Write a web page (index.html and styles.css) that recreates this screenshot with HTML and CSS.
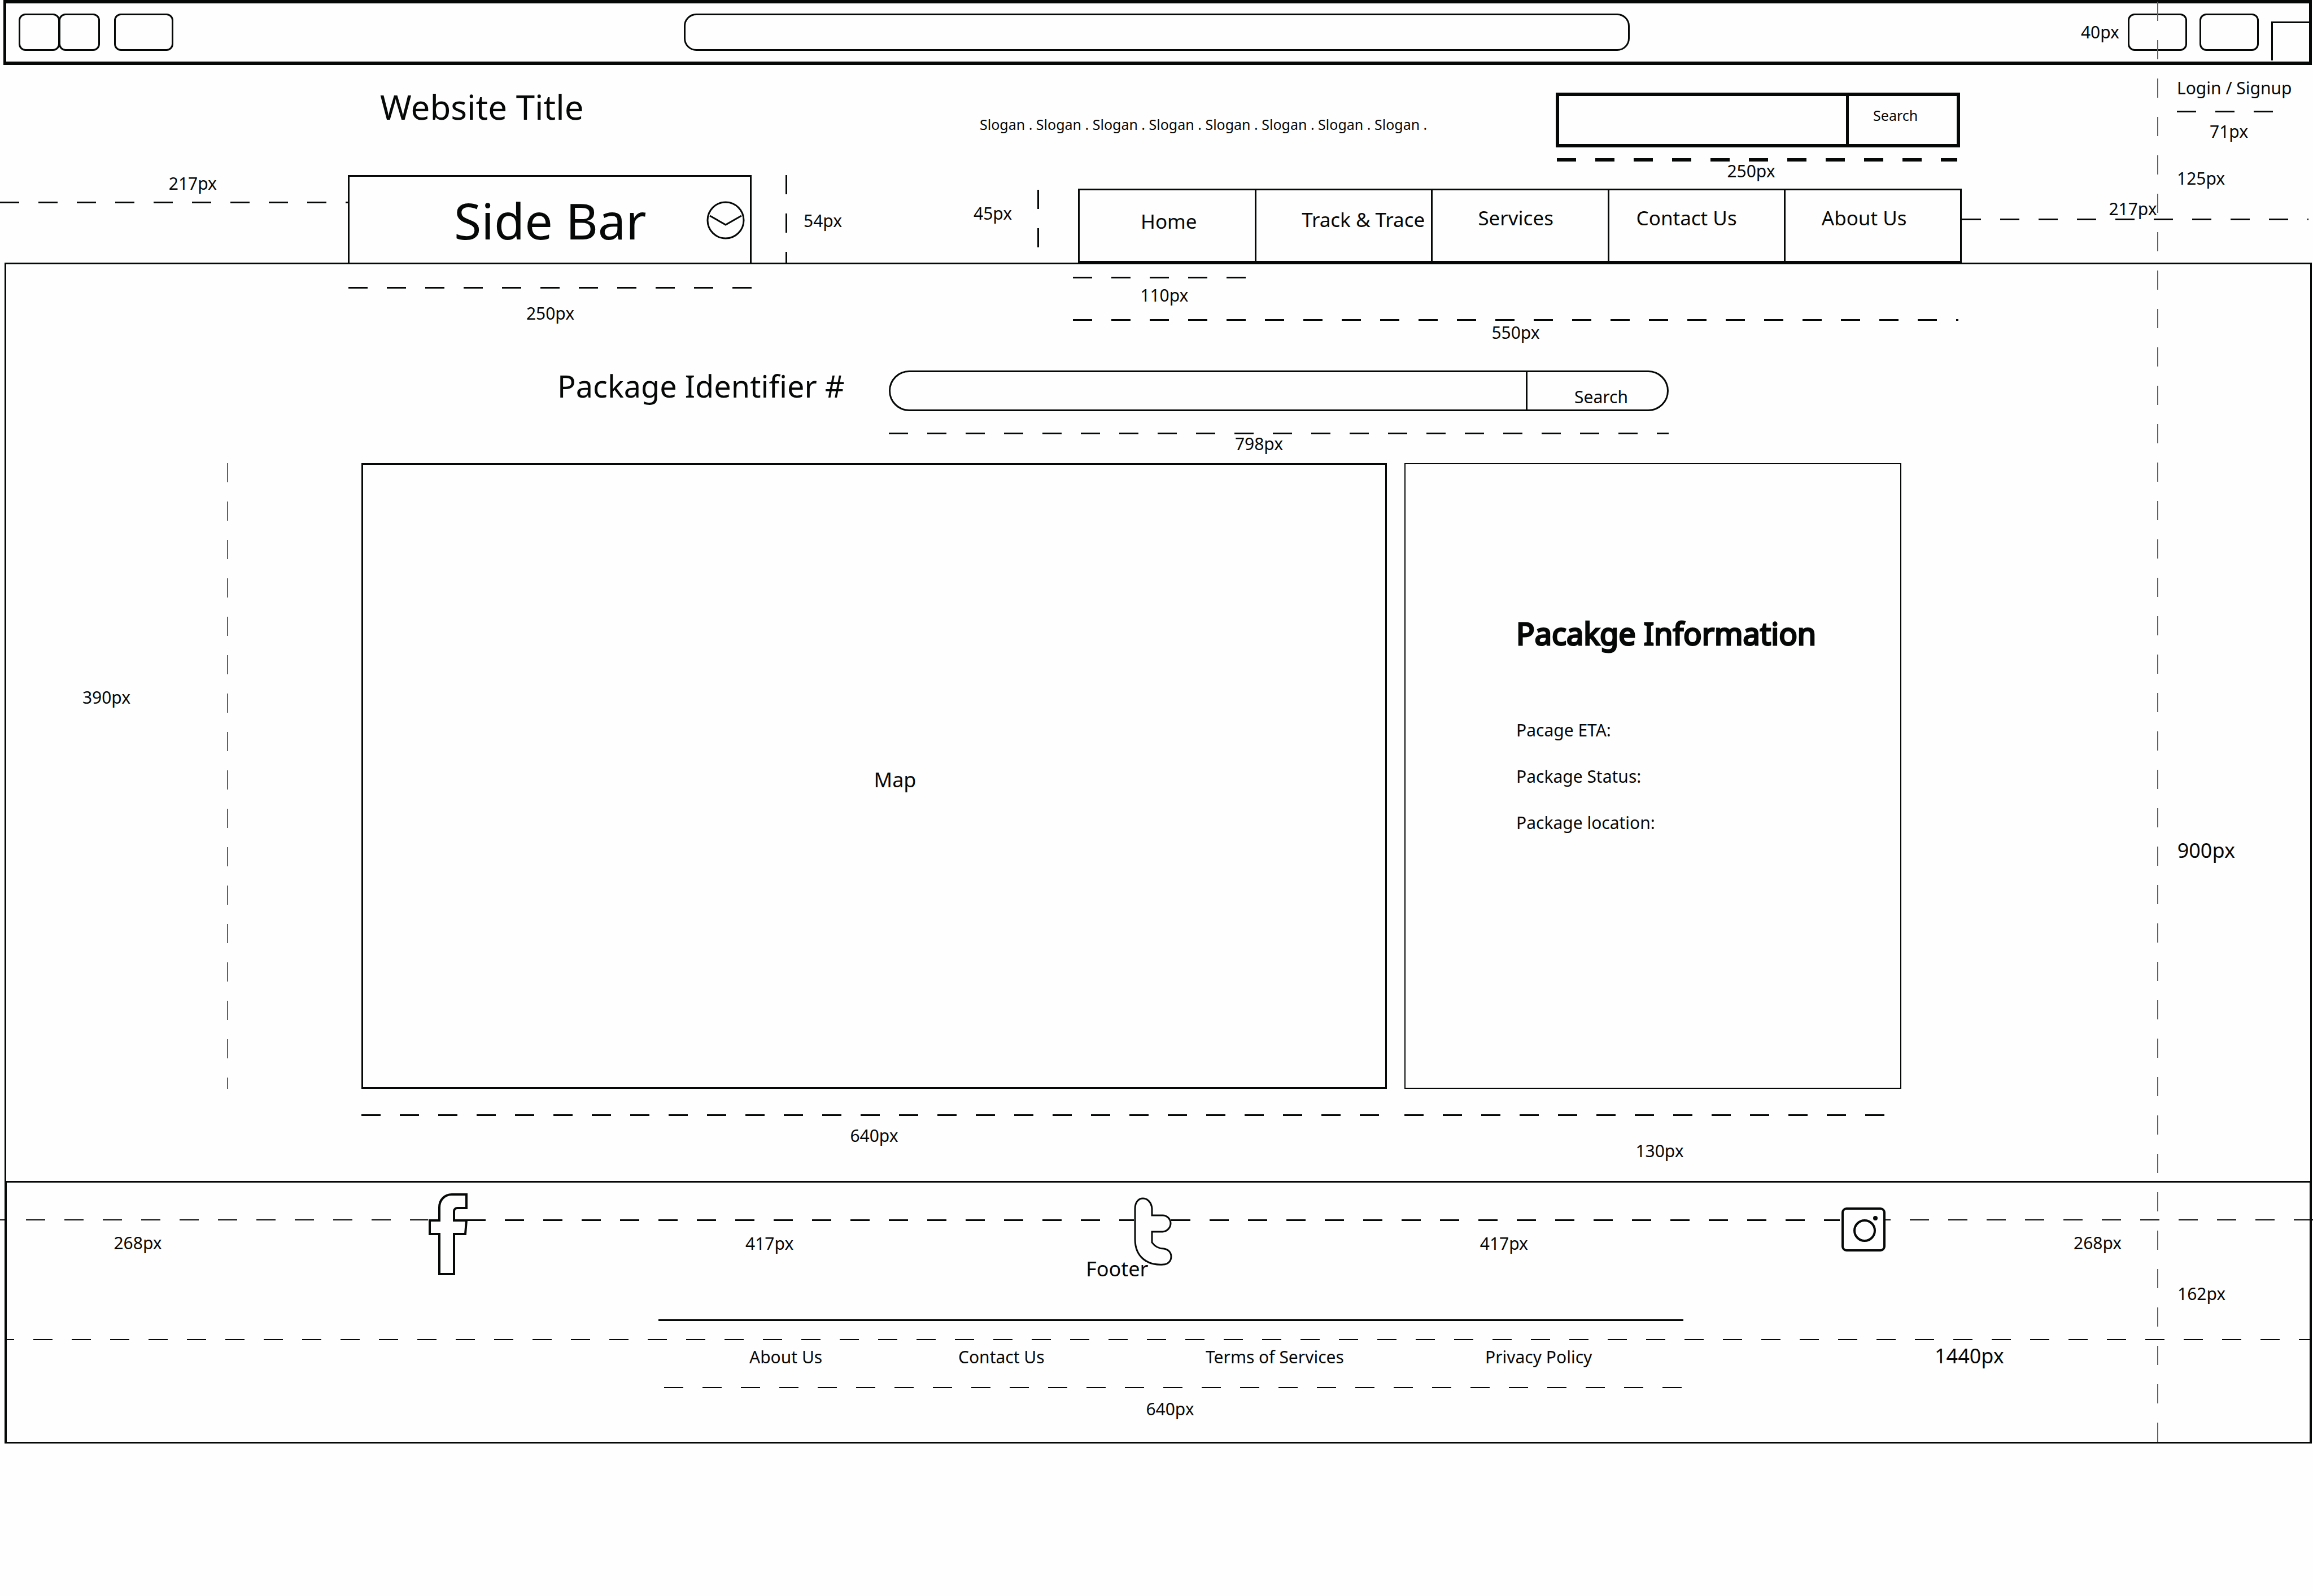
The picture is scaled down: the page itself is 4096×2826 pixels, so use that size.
FILE: index.html
```html
<!DOCTYPE html>
<html lang="en">
<head>
<meta charset="utf-8">
<meta name="viewport" content="width=device-width, initial-scale=1">
<title>Track &amp; Trace wireframe</title>
<link rel="stylesheet" href="styles.css">
</head>
<body>
<div class="page">
  <div class="browser">
    <div class="browser-pair">
      <button class="chip chip-narrow" type="button" aria-label="Back"></button>
      <button class="chip chip-narrow" type="button" aria-label="Forward"></button>
    </div>
    <button class="chip" type="button" aria-label="Reload"></button>
    <input class="address" type="text" aria-label="Address">
    <span class="label browser-size">40px</span>
    <button class="chip chip-right" type="button" aria-label="Bookmarks"></button>
    <button class="chip chip-right" type="button" aria-label="Menu"></button>
    <div class="browser-corner"></div>
  </div>

  <header>
    <div class="brand-row">
      <h1 class="site-title">Website Title</h1>
      <p class="slogan">Slogan . Slogan . Slogan . Slogan . Slogan . Slogan . Slogan . Slogan .</p>
      <div class="site-search-wrap">
        <form class="site-search">
          <input type="text" aria-label="Search the site">
          <button type="button">Search</button>
        </form>
        <div class="dash dash-bold"></div>
        <p class="label center">250px</p>
      </div>
      <div class="account">
        <a class="label" href="#">Login / Signup</a>
        <div class="dash"></div>
        <p class="label account-width">71px</p>
        <p class="label account-height">125px</p>
      </div>
    </div>

    <div class="nav-row">
      <div class="gutter-left">
        <p class="label">217px</p>
        <div class="dash"></div>
      </div>
      <div class="sidebar-tab">
        <span>Side Bar</span>
        <button type="button" aria-label="Open side bar">
          <svg width="68" height="68" viewBox="0 0 68 68" fill="none" stroke="currentColor" stroke-width="3">
            <circle cx="34" cy="34" r="32"/>
            <path d="M6 26 34 42 62 26"/>
          </svg>
        </button>
      </div>
      <div class="heights">
        <div class="dash-v sidebar-height"></div>
        <p class="label sidebar-height-label">54px</p>
        <p class="label nav-height-label">45px</p>
        <div class="dash-v nav-height"></div>
      </div>
      <nav class="main-nav">
        <a class="nav-home" href="#">Home</a>
        <a class="nav-track" href="#">Track &amp; Trace</a>
        <a class="nav-services" href="#">Services</a>
        <a class="nav-contact" href="#">Contact Us</a>
        <a class="nav-about" href="#">About Us</a>
      </nav>
      <div class="gutter-right">
        <p class="label center">217px</p>
        <div class="dash"></div>
      </div>
    </div>
  </header>

  <main>
    <div class="header-guides">
      <div class="sidebar-guide">
        <div class="dash"></div>
        <p class="label center">250px</p>
      </div>
      <div class="nav-guide">
        <div class="nav-item-guide">
          <div class="dash"></div>
          <p class="label center">110px</p>
        </div>
        <div class="dash"></div>
        <p class="label center nav-total">550px</p>
      </div>
    </div>

    <form class="lookup">
      <label for="package-id">Package Identifier #</label>
      <div class="lookup-side">
        <div class="lookup-field">
          <input id="package-id" type="text">
          <button type="button">Search</button>
        </div>
        <div class="dash"></div>
        <p class="label center lookup-width">798px</p>
      </div>
    </form>

    <div class="panels">
      <div class="panel-height">
        <p class="label center">390px</p>
        <div class="dash-v thin"></div>
      </div>
      <section class="map"><p>Map</p></section>
      <section class="info">
        <h2>Pacakge Information</h2>
        <ul>
          <li class="label">Pacage ETA:</li>
          <li class="label">Package Status:</li>
          <li class="label">Package location:</li>
        </ul>
      </section>
      <p class="page-height medium">900px</p>
      <div class="map-guide">
        <div class="dash"></div>
        <p class="label center">640px</p>
      </div>
      <div class="info-guide">
        <div class="dash"></div>
        <p class="label center">130px</p>
      </div>
    </div>
  </main>

  <footer>
    <div class="social">
      <div class="social-guide edge-left">
        <div class="dash thin"></div>
        <p class="label">268px</p>
      </div>
      <a class="facebook" href="#" aria-label="Facebook">
        <svg width="70" height="146" viewBox="0 0 70 146" fill="none" stroke="currentColor" stroke-width="4">
          <path d="M3 48H20V25C20 11 30 2 42 2H68V26H52C49 26 46 28 46 32V48H68L66 72H46V143H20V72H3Z"/>
        </svg>
      </a>
      <div class="social-guide first-gap">
        <div class="dash"></div>
        <p class="label center">417px</p>
      </div>
      <a class="tumblr" href="#" aria-label="Tumblr">
        <svg width="68" height="122" viewBox="0 0 68 122" fill="none" stroke="currentColor" stroke-width="3">
          <path d="M2 20C2 9 8 2 16 2S31 9 32 20V32H51C59 32 65 39 65 46S60 60 51 61H32V80C37 87 44 91 53 91C61 92 66 98 66 105C66 113 60 119 52 119C24 121 2 106 2 74Z"/>
        </svg>
      </a>
      <div class="social-guide second-gap">
        <div class="dash"></div>
        <p class="label center">417px</p>
      </div>
      <a class="instagram" href="#" aria-label="Instagram">
        <svg width="78" height="78" viewBox="0 0 78 78" fill="none" stroke="currentColor" stroke-width="4">
          <rect x="2" y="2" width="74" height="74" rx="7"/>
          <circle cx="41" cy="41" r="18"/>
          <circle cx="60" cy="19" r="4" fill="currentColor" stroke="none"/>
        </svg>
      </a>
      <div class="social-guide edge-right">
        <div class="dash thin"></div>
        <p class="label center">268px</p>
      </div>
    </div>

    <div class="footer-title">
      <p class="medium">Footer</p>
      <p class="label footer-height">162px</p>
    </div>
    <div class="footer-rule"><hr></div>
    <div class="dash thin page-width"></div>
    <div class="footer-links">
      <a class="label" href="#">About Us</a>
      <a class="label" href="#">Contact Us</a>
      <a class="label" href="#">Terms of Services</a>
      <a class="label" href="#">Privacy Policy</a>
      <p class="medium">1440px</p>
    </div>
    <div class="links-guide">
      <div>
        <div class="dash thin"></div>
        <p class="label center">640px</p>
      </div>
    </div>
  </footer>

  <div class="page-guide dash-v thin"></div>
</div>
</body>
</html>
```
FILE: styles.css
```css
:root {
  --ink: #060808;
  --ink-soft: #606262;
  --paper: #fefefe;
  --line: 3px solid var(--ink);
}

* {
  box-sizing: border-box;
}

body {
  margin: 0;
  background: var(--paper);
  color: var(--ink);
  font-family: "Noto Sans", "Open Sans", sans-serif;
  font-size: 30px;
  line-height: 34px;
}

h1, h2, p, ul, hr {
  margin: 0;
  padding: 0;
  font-weight: 400;
  list-style: none;
}

a {
  color: inherit;
  text-decoration: none;
}

button, input {
  margin: 0;
  padding: 0;
  border: 0;
  border-radius: 0;
  background: none;
  color: inherit;
  font: inherit;
  min-width: 0;
}

svg {
  display: block;
}

.page {
  position: relative;
}

/* Shared text and measuring lines */

.label {
  font-size: 30px;
  line-height: 34px;
  white-space: nowrap;
}

.medium {
  font-size: 36px;
  line-height: 50px;
}

.center {
  text-align: center;
}

.dash {
  height: 3px;
  background: linear-gradient(90deg, var(--ink) 50%, transparent 50%) 0 0 / 68px 100% repeat-x;
}

.dash-v {
  width: 3px;
  background: linear-gradient(var(--ink) 50%, transparent 50%) 0 0 / 100% 68px repeat-y;
}

.dash-bold {
  height: 6px;
}

.dash.thin {
  height: 2px;
}

.dash-v.thin {
  width: 2px;
  background-image: linear-gradient(var(--ink-soft) 50%, transparent 50%);
}

.page-guide {
  position: absolute;
  top: 3px;
  bottom: 3px;
  left: 93.26%;
}

/* Browser bar */

.browser {
  display: flex;
  align-items: center;
  height: 115px;
  margin: 0 2px 0 6px;
  padding: 0 0 2px 22px;
  border: 6px solid var(--ink);
  border-width: 6px 5px;
}

.browser-pair {
  display: flex;
  margin-right: 25px;
}

.chip {
  width: 105px;
  height: 66px;
  border: var(--line);
  border-radius: 12px;
}

.chip-narrow {
  width: 73px;
}

.chip-narrow + .chip-narrow {
  margin-left: -2px;
}

.address {
  flex: 1;
  height: 66px;
  margin: 0 19.7% 0 22.3%;
  border: var(--line);
  border-radius: 22px;
}

.browser-size {
  margin-right: 15px;
}

.chip-right {
  margin-right: 22px;
}

.browser-corner {
  align-self: flex-end;
  width: 67px;
  height: 69px;
  border: var(--line);
  border-width: 3px 0 0 3px;
}

/* Header */

.brand-row {
  display: grid;
  grid-template-columns: 673fr 1062fr 1020fr 716fr 384fr 241fr;
  align-items: start;
}

.site-title {
  grid-column: 2;
  margin-top: 38px;
  font-size: 60px;
  line-height: 72px;
}

.slogan {
  grid-column: 3;
  margin-top: 88px;
  font-size: 25px;
  white-space: nowrap;
}

.site-search-wrap {
  grid-column: 4;
  margin-top: 49px;
}

.site-search {
  display: grid;
  grid-template-columns: 517fr 199fr;
  height: 97px;
  margin-bottom: 19px;
  border: 6px solid var(--ink);
}

.site-search button {
  border-left: 5px solid var(--ink);
  padding: 0 26px 18px 0;
  font-size: 25px;
}

.site-search-wrap .dash {
  margin: 0 5px 0 2px;
}

.site-search-wrap .label {
  padding-right: 24px;
}

.account {
  grid-column: 6;
  margin-top: 24px;
}

.account a {
  display: block;
  margin-bottom: 23px;
}

.account .dash {
  width: 170px;
}

.account-width {
  margin: 17px 0 49px 58px;
}

.nav-row {
  display: grid;
  grid-template-columns: 616fr 715fr 578fr 1565fr 622fr;
  margin-top: -23px;
}

.gutter-left .label {
  margin: -2px 0 15px 48.5%;
}

.sidebar-tab {
  display: flex;
  align-items: center;
  justify-content: space-between;
  height: 155px;
  padding: 2px 9px 0 185px;
  border: var(--line);
  border-bottom: 0;
  font-size: 88px;
  line-height: 112px;
  white-space: nowrap;
}

.heights {
  display: grid;
  grid-template-columns: 60fr 32fr 301fr 113fr 72fr;
}

.sidebar-height {
  grid-column: 2;
}

.sidebar-height-label {
  grid-column: 3;
  margin-top: 64px;
}

.nav-height-label {
  grid-column: 4;
  margin-top: 51px;
}

.nav-height {
  grid-column: 5;
  height: 102px;
  margin-top: 26px;
}

.main-nav {
  display: grid;
  grid-template-columns: 310fr repeat(4, 312fr);
  margin-top: 24px;
  border: var(--line);
  font-size: 35px;
  line-height: 50px;
  white-space: nowrap;
}

.main-nav a {
  padding: 24px 0 0 80px;
}

.main-nav a + a {
  border-left: var(--line);
}

.main-nav .nav-home {
  padding: 30px 0 0 108px;
}

.main-nav .nav-track {
  padding-top: 27px;
}

.main-nav .nav-contact {
  padding-left: 48px;
}

.main-nav .nav-about {
  padding-left: 64px;
}

.gutter-right .label {
  margin-top: 43px;
  padding-right: 16px;
}

.gutter-right .dash {
  margin-right: 8px;
}

/* Main area */

main {
  margin: 0 2px 0 8px;
  border: var(--line);
  border-bottom: 0;
}

.header-guides {
  display: grid;
  grid-template-columns: 606fr 715fr 568fr 1568fr 623fr;
}

.sidebar-guide {
  grid-column: 2;
  margin-top: 40px;
}

.sidebar-guide .label {
  margin-top: 27px;
}

.nav-guide {
  grid-column: 4;
  margin-top: 22px;
}

.nav-item-guide {
  width: 19.5%;
  margin-bottom: 25px;
}

.nav-item-guide .label {
  margin-top: 13px;
  padding-left: 18px;
}

.nav-total {
  margin-top: 4px;
}

.lookup {
  display: grid;
  grid-template-columns: 976fr 587fr 1381fr 1136fr;
  align-items: start;
  margin-top: 41px;
}

.lookup label {
  grid-column: 2;
  font-size: 54px;
  line-height: 72px;
  white-space: nowrap;
}

.lookup-side {
  grid-column: 3;
  margin-top: 9px;
}

.lookup-field {
  display: grid;
  grid-template-columns: 1130fr 251fr;
  height: 72px;
  margin-bottom: 38px;
  border: var(--line);
  border-radius: 36px;
}

.lookup-field button {
  padding: 22px 0 0 14px;
  border-left: var(--line);
}

.lookup-width {
  padding-right: 70px;
}

.panels {
  display: grid;
  grid-template-columns: 629fr 1816fr 31fr 880fr 724fr;
  padding: 17px 0 36px;
}

.panel-height {
  display: grid;
  grid-template-columns: 391fr 238fr;
}

.panel-height .label {
  padding: 398px 36px 0 0;
}

.map {
  grid-column: 2;
  display: flex;
  align-items: center;
  justify-content: center;
  min-height: 1108px;
  padding: 14px 0 0 74px;
  border: var(--line);
  font-size: 36px;
  line-height: 48px;
}

.info {
  grid-column: 4;
  padding: 263px 0 0 196px;
  border: 2px solid var(--ink);
}

.info h2 {
  margin-bottom: 119px;
  font-size: 54px;
  line-height: 72px;
  white-space: nowrap;
  -webkit-text-stroke: 3px var(--ink);
}

.info ul {
  display: grid;
  gap: 48px;
}

.page-height {
  padding: 661px 0 0 67.5%;
}

.map-guide,
.info-guide {
  grid-row: 2;
  margin-top: 45px;
}

.map-guide {
  grid-column: 2;
}

.map-guide .label {
  margin-top: 18px;
}

.info-guide {
  grid-column: 4;
}

.info-guide .dash {
  margin-right: 28px;
}

.info-guide .label {
  margin-top: 45px;
  padding-left: 24px;
}

/* Footer */

footer {
  margin: 0 2px 0 8px;
  padding-bottom: 41px;
  border: 3px solid var(--ink);
  border-width: 3px 4px;
}

.social {
  display: grid;
  grid-template-columns: 746fr 68px 1182fr 66px 1188fr 78px 751fr;
  align-items: start;
}

.facebook {
  margin-top: 19px;
}

.tumblr {
  margin-top: 26px;
}

.instagram {
  margin-top: 44px;
}

.social-guide {
  margin-top: 65px;
}

.social-guide .label {
  margin-top: 23px;
}

.edge-left .dash {
  margin-left: -12px;
  background-position-x: -22px;
}

.edge-left .label {
  margin-left: 25.4%;
}

.first-gap .label {
  padding-right: 108px;
}

.second-gap .dash {
  margin-right: 3px;
}

.second-gap .label {
  padding-right: 8px;
}

.edge-right .dash {
  margin-right: -6px;
  background-position-x: -25px;
}

.footer-title {
  display: grid;
  grid-template-columns: 1911fr 1933fr 234fr;
  margin-top: -37px;
}

.footer-title .medium {
  grid-column: 2;
}

.footer-height {
  margin-top: 52px;
}

.footer-rule {
  display: grid;
  grid-template-columns: 1154fr 1815fr 1109fr;
  margin: 28px 0 32px;
}

.footer-rule hr {
  grid-column: 2;
  border: 0;
  border-top: var(--line);
}

.page-width {
  background-position-x: -21px;
}

.footer-links {
  display: grid;
  grid-template-columns: 1315fr 370fr 438fr 495fr 796fr 664fr;
  margin-top: 3px;
}

.footer-links .label {
  margin-top: 10px;
}

.footer-links a:first-child {
  grid-column: 2;
}

.links-guide {
  display: grid;
  grid-template-columns: 1164fr 1802fr 1112fr;
  margin-top: 30px;
}

.links-guide > div {
  grid-column: 2;
}

.links-guide .label {
  margin-top: 20px;
  padding-right: 10px;
}
```
